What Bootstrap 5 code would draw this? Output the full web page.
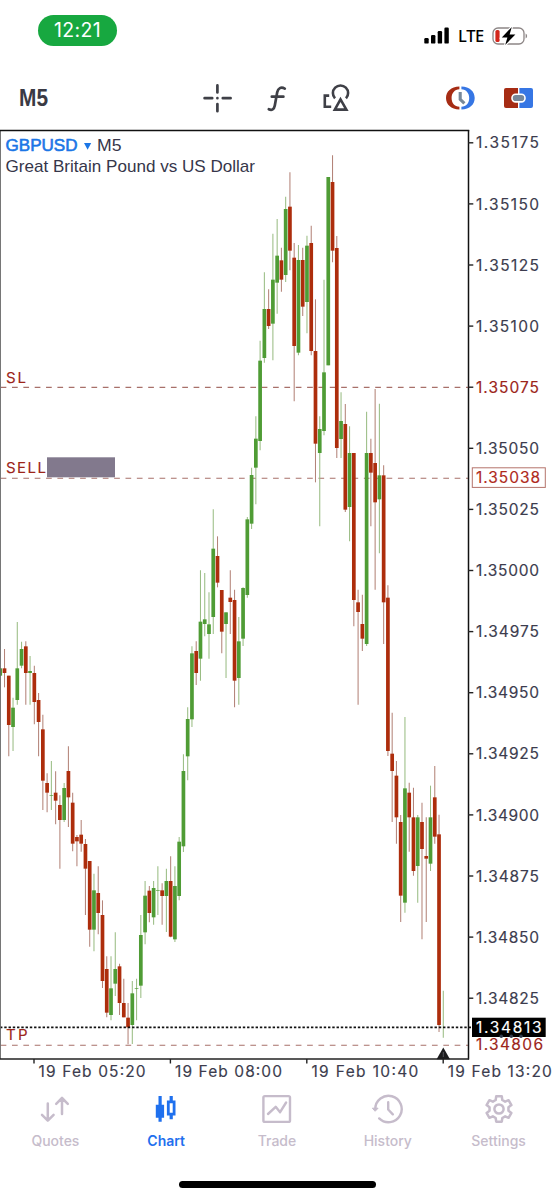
<!DOCTYPE html>
<html lang="en">
<head>
<meta charset="utf-8">
<meta name="viewport" content="width=device-width, initial-scale=1">
<title>GBPUSD M5</title>
<link href="https://cdn.jsdelivr.net/npm/bootstrap@5.3.0/dist/css/bootstrap.min.css" rel="stylesheet">
<style>
  body { font-family: Inter, "Liberation Sans", sans-serif; background: #fff; color: #36364a; }
  .phone { width: 554px; height: 1200px; overflow: hidden; }
  .status-bar { height: 64px; padding: 15px 26px 0 38px; }
  .clock-pill { width: 79px; height: 31px; background: #17a840; color: #fff; font-size: 19.5px; line-height: 31px; letter-spacing: .3px; font-weight: 400; }
  .signal-row { height: 42px; color: #000; }
  .net-label { font-size: 16.5px; font-weight: 500; font-family: "Noto Sans", sans-serif; line-height: 20px; letter-spacing: -.3px; }
  .tool-bar { height: 61px; padding-top: 3px; }
  .chart-area { height: 961px; }
  .chart-area text { font-family: Inter, sans-serif; }
  .chart-area .head-text { font-family: "Liberation Sans", Arial, sans-serif; font-size: 17px; }
  .tab-bar { height: 87px; padding-top: 6px; }
  .tab-link { color: #c6bccb; font-size: 14px; font-weight: 500; line-height: 18px; }
  .tab-link.active { color: #1f70ee; font-weight: 600; }
  .tab-link svg { margin-bottom: 6px; }
  .home-bar { width: 197px; height: 7.4px; background: #000; }
</style>
</head>
<body>
<main class="phone d-flex flex-column">
  <header class="status-bar d-flex justify-content-between align-items-start">
    <div class="clock-pill rounded-pill text-center">12:21</div>
    <div class="signal-row d-flex align-items-center">
      <svg width="26" height="18" viewBox="0 0 26 18"><g fill="#000"><rect x=".3" y="11" width="4.4" height="5.6" rx="1.2"/><rect x="7" y="8" width="4.4" height="8.6" rx="1.2"/><rect x="13.7" y="4" width="4.4" height="12.6" rx="1.2"/><rect x="20.4" y=".6" width="4.4" height="16" rx="1.2"/></g></svg>
      <span class="net-label ms-2 me-1">LTE</span>
      <svg class="ms-1" width="36" height="20" viewBox="0 0 36 20"><rect x="1" y="2" width="31" height="16" rx="5" fill="none" stroke="#8d8686" stroke-width="1.3"/><path d="M33.6 7.5v5q1.5-.8 1.5-2.5t-1.5-2.5" fill="#8d8686"/><rect x="3.4" y="4" width="4.2" height="12" rx="1.6" fill="#d3261b"/><path d="M19.8 1 9.8 11.4h5.6L13.2 19 23.4 8.4h-5.8z" fill="#000" stroke="#fff" stroke-width="2.4" paint-order="stroke"/></svg>
    </div>
  </header>

  <nav class="tool-bar">
    <svg class="d-block" width="554" height="58" viewBox="0 67 554 58" fill="none">
      <text x="19" y="106" textLength="29" lengthAdjust="spacingAndGlyphs" font-family="Liberation Sans" font-weight="700" font-size="23.5" fill="#3a3a44">M5</text>
      <g stroke="#3f4047" stroke-width="2.7" stroke-linecap="round">
        <path d="M204.6 98.2h7.6M222.8 98.2h7.8M217.4 85.4v7M217.4 104v7.2M217.4 98.2h.01"/>
        <path d="M284.8 88.6c-3.8-2-6.8-.4-7.6 3.6l-2.4 13.2c-.7 4-3 5.2-6 3.8M271.8 96.7h11.6"/>
      </g>
      <g stroke="#3f4047" stroke-width="2.6">
        <path d="M335 98.3a7.6 7.6 0 1 1 11 0"/>
        <path d="M340.5 99.3 334.8 109.6h11.6z"/>
        <path d="M329.2 95.6h-4.4v11.2h6.4"/>
      </g>
      <path d="M459.4 86.5C451 86.7 446 91.5 446 98s5 11.3 13.4 11.5v-2.7C454.5 106.5 451.6 103 451.6 98s2.900-8.500 7.800-8.800z" fill="#a62c14"/>
      <path d="M461.4 86.5C469.8 86.7 474.7 91.5 474.7 98s-4.900 11.300-13.300 11.500v-2.700C466.3 106.5 469.2 103 469.2 98s-2.900-8.500-7.800-8.800z" fill="#3676e4"/>
      <path d="M460.2 92v7.400l4.200 4" stroke="#77889a" stroke-width="3.1"/>
      <path d="M506 88h12v20h-12q-2 0-2-2V90q0-2 2-2" fill="#a62c14"/><path d="M519.4 88H531q2 0 2 2v16q0 2-2 2h-11.600z" fill="#3676e4"/>
      <rect x="512" y="94.3" width="13" height="7.6" rx="3.6" fill="#77889a" stroke="#fff" stroke-width="1.6"/>
    </svg>
  </nav>

  <section class="chart-area">
    <svg id="chart" class="d-block" width="554" height="961" viewBox="0 125 554 961">
      <g id="levels"></g>
      <g id="candles"></g>
      <g id="axes"></g>
      <g fill="#36364a">
        <text class="head-text" x="5.5" y="151" textLength="72" lengthAdjust="spacingAndGlyphs" fill="#1b76e6" stroke="#1b76e6" stroke-width=".6">GBPUSD</text>
        <path d="M84 143h7.200l-3.600 6.800z" fill="#1b76e6"/>
        <text class="head-text" x="97" y="151" textLength="24.5" lengthAdjust="spacingAndGlyphs">M5</text>
        <text class="head-text" x="5.5" y="172" textLength="249.5" lengthAdjust="spacingAndGlyphs">Great Britain Pound vs US Dollar</text>
      </g>
    </svg>
  </section>

  <nav class="tab-bar row g-0 text-center">
    <a class="tab-link col text-decoration-none">
      <svg class="d-block mx-auto" width="32" height="34" viewBox="39.4 1092 32 34" fill="none" stroke="currentColor" stroke-width="2.5" stroke-linecap="round" stroke-linejoin="round"><path d="M48.200 1103.500v17M42.400 1114.800l5.800 5.800 5.800-5.800M62.400 1114v-16M56.600 1103.800l5.800-5.800 5.800 5.800"/></svg>Quotes</a>
    <a class="tab-link active col text-decoration-none">
      <svg class="d-block mx-auto" width="32" height="34" viewBox="150.2 1092 32 34"><path fill="currentColor" d="M158.700 1096h3.200v8.700h2.400v13h-2.400v4h-3.200v-4H156v-13h2.700z"/><path fill="currentColor" fill-rule="evenodd" d="M169.800 1096h3.200v4.500h2.700v15H173v3.700h-3.200v-3.700h-2.700v-15h2.700zM169.900 1103.300v9.400h3v-9.400z"/></svg>Chart</a>
    <a class="tab-link col text-decoration-none">
      <svg class="d-block mx-auto" width="32" height="34" viewBox="261 1092 32 34" fill="none" stroke="currentColor" stroke-width="2.4"><rect x="263.4" y="1096.1" width="26.6" height="25.8" rx="1.5"/><path d="M268 1114l7.700-7.200 4.400 5.400 6-9.700" stroke-linecap="round" stroke-linejoin="round"/></svg>Trade</a>
    <a class="tab-link col text-decoration-none">
      <svg class="d-block mx-auto" width="32" height="34" viewBox="371.8 1092 32 34" fill="none" stroke="currentColor" stroke-width="2.4" stroke-linecap="round" stroke-linejoin="round"><path d="M375.100 1109A13.200 13.200 0 1 1 379 1118.400M388 1102.300v7.200l4.600 4.800"/><path d="M372.500 1108.200h5.400l-2.700 2.800z" fill="currentColor" stroke-width="1"/></svg>History</a>
    <a class="tab-link col text-decoration-none">
      <svg class="d-block mx-auto" width="32" height="34" viewBox="-16 -17 32 34" fill="none" stroke="currentColor" stroke-width="2.5" stroke-linejoin="round"><path id="gear"/><circle r="4.6"/></svg>Settings</a>
  </nav>
  <div class="home-bar rounded-pill mx-auto mt-2" id="home-bar"></div>
</main>
<script src="https://cdn.jsdelivr.net/npm/bootstrap@5.3.0/dist/js/bootstrap.bundle.min.js"></script>
<script>
const NS = 'http://www.w3.org/2000/svg';
function add(parent, tag, attrs, text) {
  const el = document.createElementNS(NS, tag);
  for (const k in attrs) el.setAttribute(k, attrs[k]);
  if (text !== undefined) el.textContent = text;
  document.getElementById(parent).appendChild(el);
}
const line = (p, x1, y1, x2, y2, stroke, w, extra) => add(p, 'line', { x1, y1, x2, y2, stroke, 'stroke-width': w, ...extra });

// Each group: vertical origin, then candles as [direction, high, body top, body bottom, low] in thirds of a pixel.
const groups = [
  [620, 'g145 145 167 167|r87 145 159 202|r167 167 315 409|g233 263 321 393|g6 145 240 254|g65 87 137 145|r64 79 159 254|g108 153 159 254|r137 159 246 313|r219 240 306 409|r284 328 482 570|r460 489 518 577|g423 525 527 570|r454 518 542 613|r526 555 600 746|g489 504 600 606|r379 453 532 621|r518 548 671 694|r645 651 664 739|r600 644 671 695|r657 672 746 885'],
  [840, 'r63 63 269 320|g101 151 269 334|r79 159 219 283|r181 225 423 444|r349 387 518 532|g349 445 525 541|g277 387 431 468|r371 379 489 525|r416 489 532 532|r489 533 562 613|g423 460 555 612|g416 444 446 541'],
  [780, 'g405 465 617 654|g303 347 457 493|r318 332 399 427|g303 324 412 434|g259 331 333 405|r310 331 348 434|g266 303 348 456|r229 303 470 472|g259 318 478 486|g171 185 348 361|g-77 -27 199 216'],
  [500, 'g622 657 769 841|g439 460 658 681|r424 453 519 555|g211 365 476 542|g219 358 372 409|g277 373 402 476|g28 146 351 402|r109 168 248 262|r270 270 395 460|g337 337 372 534|r211 293 306 402|r269 300 542 622|g351 424 534 614|g262 264 416 438|g51 58 285 293'],
  [320, 'g443 465 611 627|g289 356 443 553|g62 122 363 391'],
  [150, 'g367 477 624 638|r418 477 528 537|g251 389 521 631|g207 317 398 491|r293 331 389 425|g140 177 375 396|r67 170 302 361|r279 323 588 754|g285 330 608 616|r293 330 470 498|g257 287 456 550|r227 279 603 616|r448 603 881 997|g799 837 909 1129|g389 667 843 856|g81 81 646 646|r16 96 302 337|r258 294 894 924|g727 813 867 924|r762 822 1079 1086'],
  [360, 'g199 279 441 544|r279 279 720 799|r689 727 756 1034|r704 792 836 873|g155 279 852 858|r236 279 338 499|r87 309 427 689|g131 346 418 580|r316 346 727 852|r676 713 1173 1188'],
  [700, 'r38 161 213 366|r183 227 352 431|r345 366 587 666|g51 265 608 638|r248 278 352 455|r263 352 513 527|g345 352 498 608|r308 366 447 718|r352 468 476 666|g257 352 491 513|r198 292 410 431|r344 403 975 996|g872 1012 1013 1013']
];
let i = 0;
for (const [origin, list] of groups) for (const c of list.split('|')) {
  const up = c[0] === 'g', [h, t, b, l] = c.slice(1).split(' ').map(v => origin + v / 3), x = 0.25 + 4.26 * i++;
  line('candles', x, h, x, l, up ? '#9abd84' : '#b48479', 1.05);
  if (b - t > .4) add('candles', 'rect', { x: x - 1.85, y: t, width: 3.7, height: b - t, fill: up ? '#4f9c35' : '#ad2d0c' });
}

// Order levels
for (const y of [387.4, 478.2, 1045.2]) line('levels', .65, y, 468, y, '#a8706a', 1.1, { 'stroke-dasharray': '5.7 5.65' });
line('axes', 0, 1027.4, 472, 1027.4, '#111', 1.7, { 'stroke-dasharray': '2.4 1.86' });
const red = '#9c2519';
const label = (x, y, w, s, fill = '#3c3c4e', size = 15.5) => add('axes', 'text', { x, y, textLength: w, fill, stroke: fill, 'stroke-width': .15, 'font-size': size, 'font-weight': 400 }, s);
label(6, 382.6, 20, 'SL', red, 15);
label(6, 473, 40, 'SELL', red, 15);
label(6, 1040, 21.5, 'TP', red, 15);
add('axes', 'rect', { x: 47, y: 457.3, width: 68, height: 20, fill: '#82798d' });

// Frame and price scale
line('axes', .4, 130, .4, 1059, '#666', 1);
line('axes', 0, 130.6, 469.2, 130.6, '#111', 1.5);
line('axes', 468.5, 130, 468.5, 1059.6, '#111', 1.5);
line('axes', 0, 1059, 469, 1059, '#222', 1.4);
for (let k = 0; k < 15; k++) {
  const y = 142.8 + 61.1 * k;
  line('axes', 468, y, 473.3, y, '#222', 1.4);
  label(476, y + 5.6, 63, (1.35175 - k * .00025).toFixed(5), k === 4 ? red : '#3c3c4e');
}
add('axes', 'rect', { x: 472.3, y: 467.8, width: 73, height: 19.6, fill: '#fff', stroke: '#b4736b' });
label(476, 483.4, 64, '1.35038', '#b02a1c');
label(476, 1050.4, 67, '1.34806', red);
add('axes', 'rect', { x: 472, y: 1017.7, width: 73.7, height: 19.3, fill: '#000' });
label(476, 1033, 65.5, '1.34813', '#fff');
for (const x of [501.3, 511.3, 521]) add('axes', 'circle', { cx: x, cy: 1036.2, r: 1.8, fill: '#333c4c' });

// Time scale
['05:20', '08:00', '10:40', '13:20'].forEach((t, n) => {
  const x = 34 + 136.4 * n;
  line('axes', x, 1059, x, 1063.5, '#222', 1.4);
  label(x + 4.6, 1077, n === 3 ? 104 : 107, '19 Feb ' + t);
});
add('axes', 'path', { d: 'M443.3 1047.5L450 1059.2H436.6Z', fill: '#1c1c1e' });
line('axes', 443.3, 1052, 443.3, 1057, '#55555c', 1);

// Six-toothed gear outline
let d = '';
for (let n = 0; n < 6; n++) for (const [a, r] of [[-20, 9.6], [-12.5, 13], [12.5, 13], [20, 9.6]]) {
  const g = (n * 60 + a) * Math.PI / 180;
  d += (d ? 'L' : 'M') + (r * Math.sin(g)).toFixed(2) + ' ' + (-r * Math.cos(g)).toFixed(2);
}
document.getElementById('gear').setAttribute('d', d + 'Z');
</script>
</body>
</html>
